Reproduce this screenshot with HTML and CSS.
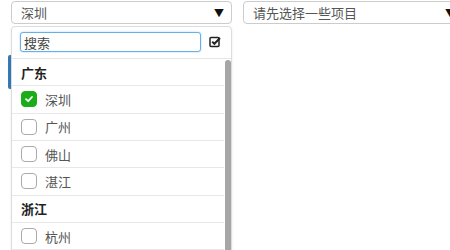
FILE: index.html
```html
<!DOCTYPE html>
<html lang="zh-CN">
<head>
    <meta charset="UTF-8">
    <title>多选下拉</title>
    <link rel="stylesheet" href="styles.css">
</head>
<body>
    <div class="row">
        <div class="picker">
            <div class="select">
                <span class="value">深圳</span>
                <span class="caret">&#9660;</span>
            </div>

            <!-- 左侧的蓝色标记 -->
            <div class="side-mark"></div>

            <div class="menu">
                <div class="search-bar">
                    <input class="search" type="text" value="搜索">
                    <svg class="select-all" width="12" height="12" viewBox="0 0 12 12">
                        <rect x="1" y="1.5" width="9" height="9" rx="1" fill="none" stroke="#222" stroke-width="1.5"/>
                        <path d="M3.2 5.6 L5.4 7.8 L11 2" fill="none" stroke="#222" stroke-width="2"/>
                    </svg>
                </div>
                <div class="list">
                    <div class="group">广东</div>
                    <div class="item checked"><span class="box"><svg width="10" height="10" viewBox="0 0 10 10"><path d="M2 5.2 L4.2 7.2 L8 3" fill="none" stroke="#fff" stroke-width="1.8" stroke-linecap="round" stroke-linejoin="round"/></svg></span>深圳</div>
                    <div class="item"><span class="box"></span>广州</div>
                    <div class="item"><span class="box"></span>佛山</div>
                    <div class="item"><span class="box"></span>湛江</div>
                    <div class="group">浙江</div>
                    <div class="item"><span class="box"></span>杭州</div>
                </div>
                <div class="scrollbar"></div>
            </div>
        </div>

        <div class="select second">
            <span class="value">请先选择一些项目</span>
            <span class="caret">&#9660;</span>
        </div>
    </div>
</body>
</html>
```

FILE: styles.css
```css
html, body {
    margin: 0;
    height: 100%;
    overflow: hidden;
}

body {
    font-family: "Noto Sans CJK SC", "Noto Sans", sans-serif;
    font-size: 13px;
    color: #555;
    background: #fff;
    padding: 1px 0 0 11px;
}

.row {
    display: flex;
    gap: 11px;
    align-items: flex-start;
}

.picker {
    width: 221px;
    position: relative;
}

.select {
    height: 23px;
    box-sizing: border-box;
    border: 1px solid #ccc;
    border-radius: 4px;
    display: flex;
    align-items: center;
    justify-content: space-between;
    padding: 0 7px 0 9px;
    background: #fff;
}

.select .value {
    line-height: 1;
}

.caret {
    font-size: 10px;
    color: #111;
}

.second {
    width: 213px;
    flex-shrink: 0;
    padding-right: 0;
}

.side-mark {
    position: absolute;
    left: -3px;
    top: 54px;
    width: 3px;
    height: 34px;
    background: #337ab7;
    border-radius: 2px 0 0 2px;
}

.menu {
    margin-top: 2px;
    border: 1px solid #ddd;
    border-radius: 4px 4px 0 0;
    position: relative;
    background: #fff;
    height: 230px;
    overflow: hidden;
    box-shadow: 0 1px 3px rgba(0, 0, 0, 0.08);
}

.search-bar {
    display: flex;
    align-items: center;
    gap: 8px;
    padding: 5px 10px 6px 8px;
    border-bottom: 1px solid #e5e5e5;
}

.search {
    width: 182px;
    height: 20px;
    box-sizing: border-box;
    border: 1px solid #66afe9;
    border-radius: 3px;
    padding: 0 3px;
    font-family: inherit;
    font-size: 13px;
    color: #444;
    outline: none;
    box-shadow: 0 0 2px rgba(102, 175, 233, 0.6);
}

.select-all {
    flex-shrink: 0;
}

.list {
    margin-right: 7px;
}

.group,
.item {
    height: 27.33px;
    box-sizing: border-box;
    border-bottom: 1px solid #e8e8e8;
    display: flex;
    align-items: center;
    padding-left: 9px;
}

.group {
    font-weight: bold;
    color: #222;
}

.item .box {
    width: 16px;
    height: 16px;
    box-sizing: border-box;
    border: 1px solid #aaa;
    border-radius: 4px;
    margin-right: 8px;
    display: flex;
    align-items: center;
    justify-content: center;
}

.item.checked .box {
    background: #1aad19;
    border-color: #1aad19;
}

.scrollbar {
    position: absolute;
    right: 0;
    top: 33px;
    width: 6px;
    height: 200px;
    background: #a6a6a6;
    border-radius: 3px 3px 0 0;
}
```
